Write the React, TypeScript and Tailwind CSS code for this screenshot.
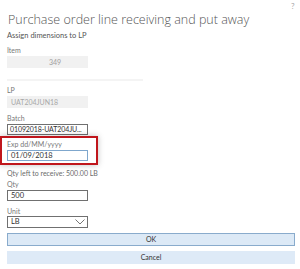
export default function App() {
  return (
    <div className="relative w-[300px] h-[269px] overflow-hidden bg-white font-['Lato','Noto_Sans',sans-serif] text-[#333]">
      <span className="absolute left-[291px] top-[1px] text-[8px] leading-[10px] text-[#aaa]">?</span>

      <div className="flex flex-col">
        <div className="h-[31px] pt-[11px] pl-[8px] font-['Open_Sans',sans-serif] text-[12.5px] leading-[18px] font-light text-[#555] whitespace-nowrap">
          Purchase order line receiving and put away
        </div>

        <div className="pl-[7px] flex flex-col">
          <div className="h-[10px] text-[7.5px] leading-[10px] text-[#555]">Assign dimensions to LP</div>

          <Label className="mt-[4px]">Item</Label>
          <div className="mt-[1px] w-[81px] h-[12px] bg-[#f1f1f1] pl-[42px] text-[7px] leading-[12px] text-[#a0a0a0]">
            349
          </div>

          <div className="mt-[11px] w-[136px] h-[2px] bg-[#f4f4f4]" />

          <Label className="mt-[4px]">LP</Label>
          <div className="mt-[1px] w-[81px] h-[12px] bg-[#f1f1f1] pl-[4px] text-[7px] leading-[12px] text-[#a8a8a8]">
            UAT204JUN18
          </div>

          <Label className="mt-[5px]">Batch</Label>
          <div className="mt-[1px] w-[81px] h-[11px] border border-[#707070] pl-[2px] text-[7px] leading-[9px] tracking-[-0.1px] text-[#333] whitespace-nowrap">
            01092018-UAT204JU...
          </div>
        </div>

        <div className="mt-[1px] w-[98px] h-[29px] border-2 border-[#c0161c] pl-[5px] flex flex-col shadow-[0_0_6px_rgba(0,0,0,0.25)]">
          <Label className="mt-[1px]">Exp dd/MM/yyyy</Label>
          <div className="mt-[1px] w-[81px] h-[11px] border border-[#7fa7cd] pl-[3px] text-[7.5px] leading-[9px] text-[#333]">
            01/09/2018
          </div>
        </div>

        <div className="pl-[7px] flex flex-col">
          <div className="mt-[3px] h-[10px] text-[7px] leading-[10px] text-[#6b6b6b] whitespace-nowrap">
            Qty left to receive: 500.00 LB
          </div>

          <Label className="mt-[1px]">Qty</Label>
          <div className="mt-[1px] w-[81px] h-[11px] border border-[#707070] pl-[3px] text-[7.5px] leading-[9px] text-[#333]">
            500
          </div>

          <Label className="mt-[5px]">Unit</Label>
          <div className="w-[81px] h-[12px] border border-[#707070] pl-[3px] pr-[2px] flex items-center justify-between text-[7.5px] leading-[10px] text-[#333]">
            <span>LB</span>
            <svg width="10" height="6" viewBox="0 0 10 6" fill="none">
              <path d="M0.5 0.5 L5 5 L9.5 0.5" stroke="#666" strokeWidth="0.9" />
            </svg>
          </div>

          <button className="mt-[5px] w-[288px] h-[13px] bg-[#dce9f6] border border-[#89abcc] text-[7px] leading-[11px] text-[#333] text-center">
            OK
          </button>
          <button className="mt-[5px] w-[288px] h-[13px] bg-[#deeaf7] text-[7px] leading-[13px] text-[#333] text-center">
            Cancel
          </button>
        </div>
      </div>
    </div>
  );
}

function Label({ children, className = "" }: { children: React.ReactNode; className?: string }) {
  return <div className={`h-[10px] text-[7px] leading-[10px] text-[#777] ${className}`}>{children}</div>;
}
